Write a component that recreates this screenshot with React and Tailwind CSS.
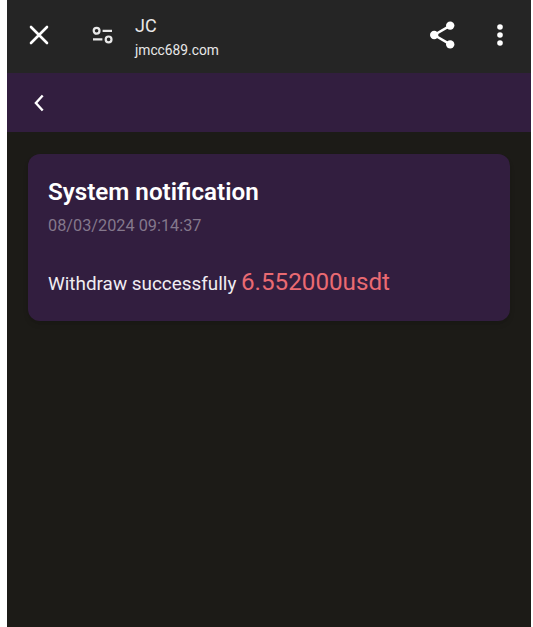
function CloseIcon() {
    return (
        <svg className="w-5 h-5" viewBox="0 0 20 20" fill="none" stroke="currentColor" strokeWidth="2.6" strokeLinecap="round">
            <path d="M2 2 18 18M18 2 2 18" />
        </svg>
    );
}

function TuneIcon() {
    return (
        <svg className="w-6 h-5" viewBox="0 0 24 20" fill="none" stroke="currentColor" strokeWidth="2.2">
            <circle cx="5.6" cy="5.8" r="2.9" />
            <path d="M11.6 5.8H21M2 14.4H11.4" />
            <circle cx="17.6" cy="14.4" r="2.9" />
        </svg>
    );
}

function ShareIcon() {
    return (
        <svg className="w-7 h-7" viewBox="0 0 28 28" fill="currentColor">
            <path d="M22.2 4.6 6.2 14 22.2 23.4" fill="none" stroke="currentColor" strokeWidth="2.4" />
            <circle cx="22.2" cy="4.6" r="4.2" />
            <circle cx="6.2" cy="14" r="4.2" />
            <circle cx="22.2" cy="23.4" r="4.2" />
        </svg>
    );
}

function MoreIcon() {
    return (
        <svg className="w-2 h-6" viewBox="0 0 8 24" fill="currentColor">
            <circle cx="4" cy="4" r="2.8" />
            <circle cx="4" cy="12" r="2.8" />
            <circle cx="4" cy="20" r="2.8" />
        </svg>
    );
}

function BackIcon() {
    return (
        <svg className="w-3 h-[18px]" viewBox="0 0 12 18" fill="none" stroke="currentColor" strokeWidth="2.4">
            <path d="M9.7 1.5 2.9 9 9.7 16.5" />
        </svg>
    );
}

export default function App() {
    return (
        <div className="w-[533px] h-[627px] bg-white pl-[7px] pr-[2px] overflow-hidden font-['Roboto',sans-serif]">
            <div className="h-full flex flex-col bg-[#1c1b17] text-white">
                {/* Browser bar */}
                <header className="h-[73px] shrink-0 flex items-center bg-[#252525] pl-[22px] pr-[27px] pb-[3px]">
                    <CloseIcon />
                    <div className="ml-[42px] text-[#e8e8e8]">
                        <TuneIcon />
                    </div>
                    <div className="ml-[20px] flex-1 pt-[6px] text-[#e8e8e8]">
                        <p className="text-[18px] leading-[24px]">JC</p>
                        <p className="text-[13.8px] leading-[24px]">jmcc689.com</p>
                    </div>
                    <ShareIcon />
                    <div className="ml-[40px]">
                        <MoreIcon />
                    </div>
                </header>

                {/* Page bar */}
                <nav className="h-[59px] shrink-0 flex items-center bg-[#321e3f] pl-[26px]">
                    <BackIcon />
                </nav>

                {/* Notification */}
                <main className="pt-[22px] pl-[21px] pr-[21px]">
                    <div className="h-[167px] rounded-[12px] bg-[#321e3f] shadow-md px-5 pt-[22px]">
                        <h1 className="text-[24.2px] leading-[32px] font-[600]">System notification</h1>
                        <p className="mt-[6px] text-[16.3px] leading-[24px] text-[#84788c]">08/03/2024 09:14:37</p>
                        <p className="mt-[28px] text-[18.9px] leading-[32px] text-[#f0edf2] whitespace-nowrap">
                            Withdraw successfully <span className="text-[24.2px] text-[#ea6a72]">6.552000usdt</span>
                        </p>
                    </div>
                </main>
            </div>
        </div>
    );
}
